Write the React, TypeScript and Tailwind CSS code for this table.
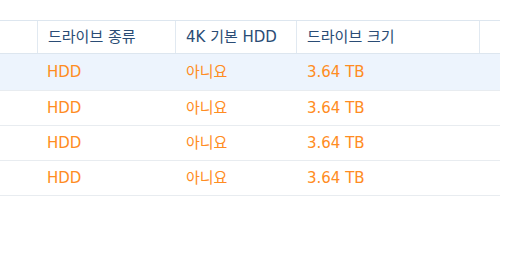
const rows = [
  { type: 'HDD', native4k: '아니요', size: '3.64 TB', selected: true },
  { type: 'HDD', native4k: '아니요', size: '3.64 TB', selected: false },
  { type: 'HDD', native4k: '아니요', size: '3.64 TB', selected: false },
  { type: 'HDD', native4k: '아니요', size: '3.64 TB', selected: false },
]

const font = { fontFamily: '"DejaVu Sans", "Noto Sans CJK KR", sans-serif' }

export default function App() {
  return (
    <div className="h-[256px] w-[518px] bg-white pt-5" style={font}>
      <div className="w-[500px] text-[15px]">
        {/* Header */}
        <div className="flex h-[34px] border-y border-[#dde6ef] text-[#2a4c75]">
          <div className="w-[38px] shrink-0 border-r border-[#e1e9f1]" />
          <div className="flex w-[138px] shrink-0 items-center border-r border-[#e1e9f1] pl-[10px]">
            드라이브 종류
          </div>
          <div className="flex w-[121px] shrink-0 items-center border-r border-[#e1e9f1] pl-[10px]">
            4K 기본 HDD
          </div>
          <div className="flex w-[183px] shrink-0 items-center border-r border-[#e1e9f1] pl-[10px]">
            드라이브 크기
          </div>
          <div className="flex-1" />
        </div>

        {/* Rows */}
        {rows.map((r, i) => (
          <div
            key={i}
            className={`flex items-center border-b border-[#e8ecf0] text-[#ff8c22] ${
              r.selected ? 'h-[37px] bg-[#edf4fd]' : 'h-[35px]'
            }`}
          >
            <div className="w-[38px] shrink-0" />
            <div className="w-[138px] shrink-0 pl-[9px]">{r.type}</div>
            <div className="w-[121px] shrink-0 pl-[10px]">{r.native4k}</div>
            <div className="w-[183px] shrink-0 pl-[10px]">{r.size}</div>
          </div>
        ))}
      </div>
    </div>
  )
}
